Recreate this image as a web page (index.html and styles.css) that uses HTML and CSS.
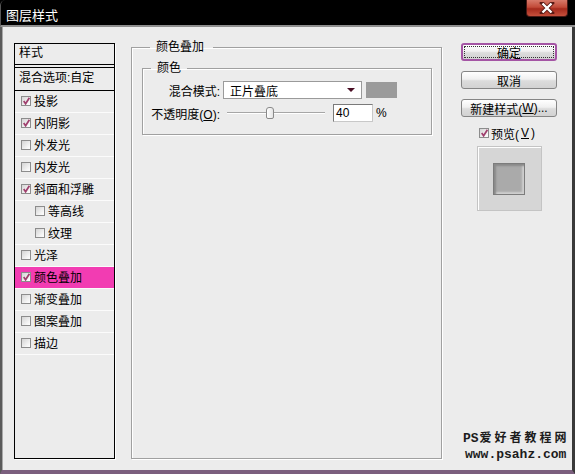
FILE: index.html
```html
<!DOCTYPE html>
<html lang="zh-CN">
<head>
<meta charset="utf-8">
<title>图层样式</title>
<link rel="stylesheet" href="styles.css">
</head>
<body>
<div class="window">
  <div class="titlebar">
    <span class="title">图层样式</span>
    <div class="close">
      <svg width="16" height="12" viewBox="0 0 16 12"><path d="M3 1 L13 11 M13 1 L3 11" stroke="#5a1a14" stroke-width="4" stroke-linecap="square"/><path d="M3.5 1.5 L12.5 10.5 M12.5 1.5 L3.5 10.5" stroke="#ffffff" stroke-width="2.4"/></svg>
    </div>
  </div>
  <div class="content">
    <div class="panel">
      <div class="ph">样式</div>
      <div class="pb">混合选项:自定</div>
      <div class="item"><span class="cb on"></span>投影</div>
      <div class="item"><span class="cb on"></span>内阴影</div>
      <div class="item"><span class="cb"></span>外发光</div>
      <div class="item"><span class="cb"></span>内发光</div>
      <div class="item"><span class="cb on"></span>斜面和浮雕</div>
      <div class="item sub"><span class="cb"></span>等高线</div>
      <div class="item sub"><span class="cb"></span>纹理</div>
      <div class="item"><span class="cb"></span>光泽</div>
      <div class="item sel"><span class="cb on"></span>颜色叠加</div>
      <div class="item"><span class="cb"></span>渐变叠加</div>
      <div class="item"><span class="cb"></span>图案叠加</div>
      <div class="item"><span class="cb"></span>描边</div>
    </div>

    <fieldset class="outer">
      <legend class="lg-outer">颜色叠加</legend>
      <fieldset class="inner">
        <legend class="lg-inner">颜色</legend>
        <div class="form">
          <div class="lbl">混合模式:</div>
          <div class="ctl">
            <div class="select"><span>正片叠底</span><span class="arrow"></span></div>
            <div class="swatch"></div>
          </div>
          <div class="lbl">不透明度(<u>O</u>):</div>
          <div class="ctl">
            <div class="slider"><div class="groove"></div><div class="thumb"></div></div>
            <div class="num">40</div>
            <span class="pct">%</span>
          </div>
        </div>
      </fieldset>
    </fieldset>

    <div class="side">
      <div class="btn default"><span class="focus">确定</span></div>
      <div class="btn">取消</div>
      <div class="btn">新建样式(<u>W</u>)...</div>
      <div class="preview-row"><span class="cb on"></span>预览(<u>V</u>)</div>
      <div class="preview"><div class="square"></div></div>
    </div>

    <div class="watermark">
      <div class="wm1"><span class="ps">PS</span><span class="cn">爱好者教程网</span></div>
      <div class="wm2">www.psahz.com</div>
    </div>
  </div>
</div>
</body>
</html>
```

FILE: styles.css
```css
* { box-sizing: border-box; }
html, body { margin: 0; padding: 0; background: #000; }
body {
  font-family: "Liberation Sans", "Noto Sans CJK SC", sans-serif;
  font-size: 12px;
  color: #000;
}
.window {
  width: 575px;
  height: 474px;
  background: #000;
  display: flex;
  flex-direction: column;
  border-radius: 5px 5px 0 0;
  overflow: hidden;
}
.titlebar {
  height: 27px;
  flex: none;
  display: flex;
  justify-content: space-between;
  align-items: flex-start;
  border-bottom: 2px solid #8e8e8e;
  border-left: 1px solid #555;
  border-radius: 5px 5px 0 0;
}
.title {
  color: #fff;
  font-size: 13px;
  line-height: 16px;
  padding: 7px 0 0 5px;
  font-family: "Noto Sans CJK SC", sans-serif;
}
.close {
  width: 42px;
  height: 17px;
  margin-right: 7px;
  border: 1px solid #4a1a16;
  border-top: none;
  border-radius: 0 0 4px 4px;
  background: linear-gradient(#d77a6a, #c24a38 45%, #a52a1c 55%, #c5503c);
  display: flex;
  align-items: center;
  justify-content: center;
}
.content {
  flex: 1;
  position: relative;
  background: #ececec;
  border-left: 2px solid #5a5a5a;
  border-right: 3px solid #3a3a3a;
  border-bottom: 4px solid #7b5f7e;
  box-shadow: inset 1px 0 0 #a8a8a8;
  display: grid;
  grid-template-columns: 101px 311px 99px;
  column-gap: 16px;
  align-items: start;
  padding: 12px 0 0 12px;
}
.content > .side { margin-left: 3px; }

/* left panel */
.panel {
  margin-top: 4px;
  height: 416px;
  border: 1px solid #000;
  box-shadow: 1px 1px 0 #fff;
}
.ph {
  height: 24px;
  line-height: 19px;
  padding-left: 4px;
  border-bottom: 4px double #000;
}
.pb {
  height: 23px;
  line-height: 20px;
  padding-left: 4px;
  border-bottom: 1px solid #000;
}
.item {
  height: 22px;
  border-bottom: 1px solid #fbfbfb;
  display: flex;
  align-items: center;
  gap: 3px;
  padding-left: 6px;
  padding-bottom: 2px;
}
.item.sub { padding-left: 20px; }
.item.sel { background: #f23cb2; }
.cb {
  width: 10px;
  height: 10px;
  flex: none;
  border: 1px solid #8c8c8c;
  background: linear-gradient(135deg, #d4d4d4, #f4f4f4 70%, #fff);
  position: relative;
}
.cb.on::after {
  content: "";
  position: absolute;
  left: 1px;
  top: 0px;
  width: 7px;
  height: 8px;
  background: no-repeat center/contain url("data:image/svg+xml;utf8,<svg xmlns='http://www.w3.org/2000/svg' viewBox='0 0 7 8'><path d='M0.7 4 L2.6 6.8 L6.4 0.8' fill='none' stroke='%23a0406e' stroke-width='1.7'/></svg>");
}

/* fieldsets */
fieldset {
  margin: 0;
  padding: 0;
  min-width: 0;
  border: 1px solid #a0a0a0;
  box-shadow: 1px 1px 0 #fff, inset 1px 1px 0 #fff;
}
legend {
  line-height: 16px;
  height: 16px;
}
.outer {
  height: 420px;
  padding: 5px 9px 0 10px;
}
.lg-outer {
  margin-left: 8px;
  padding: 0 9px 0 6px;
}
.inner {
  width: 290px;
  padding: 0 0 12px 0;
}
.lg-inner {
  margin-left: 8px;
  padding: 0 6px 0 6px;
}
.form {
  padding-top: 5px;
  display: grid;
  grid-template-columns: 80px 1fr;
  row-gap: 5px;
  align-items: center;
}
.lbl {
  text-align: right;
  padding-right: 3px;
  white-space: nowrap;
}
.ctl {
  display: flex;
  align-items: center;
  height: 18px;
}
.select {
  width: 139px;
  height: 18px;
  border: 1px solid #9a9a9a;
  background: #fff;
  display: flex;
  align-items: center;
  justify-content: space-between;
  padding: 0 6px 0 6px;
}
.arrow {
  width: 0;
  height: 0;
  border-left: 4px solid transparent;
  border-right: 4px solid transparent;
  border-top: 4px solid #4a0e24;
}
.swatch {
  width: 31px;
  height: 16px;
  margin-left: 4px;
  background: #9b9b9b;
}
.slider {
  position: relative;
  width: 98px;
  height: 18px;
  margin-left: 4px;
}
.groove {
  position: absolute;
  left: 0;
  right: 0;
  top: 8px;
  height: 2px;
  border-top: 1px solid #a6a6a6;
  border-bottom: 1px solid #fff;
}
.thumb {
  position: absolute;
  left: 39px;
  top: 3px;
  width: 8px;
  height: 12px;
  border: 1px solid #8a8a8a;
  border-radius: 3px 3px 2px 2px;
  background: linear-gradient(90deg, #fff, #e4e4e4);
}
.num {
  width: 40px;
  height: 18px;
  margin-left: 8px;
  background: #fff;
  border: 1px solid #7a7a7a;
  border-right-color: #c8c8c8;
  border-bottom-color: #c8c8c8;
  line-height: 16px;
  padding-left: 2px;
}
.pct { margin-left: 3px; }

/* right side */
.side {
  margin-top: 4px;
  display: flex;
  flex-direction: column;
  align-items: stretch;
}
.btn {
  height: 18px;
  border: 1px solid #858585;
  border-radius: 3px;
  background: linear-gradient(#ffffff, #f0f0f0 45%, #dcdcdc 55%, #d2d2d2);
  display: flex;
  align-items: center;
  justify-content: center;
  margin-bottom: 10px;
  white-space: nowrap;
}
.btn.default {
  border: 2px solid #a455a4;
  padding: 1px;
}
.focus {
  flex: 1;
  align-self: stretch;
  border: 1px dotted #333;
  display: flex;
  align-items: center;
  justify-content: center;
}
.preview-row {
  display: flex;
  align-items: center;
  justify-content: center;
  gap: 2px;
  height: 16px;
  margin-top: -2px;
  padding-right: 4px;
}
.preview {
  align-self: center;
  margin-top: 5px;
  width: 65px;
  height: 65px;
  background: #d6d6d6;
  border: 1px solid #c4c4c4;
  box-shadow: inset 1px 1px 0 #fff;
  display: flex;
  align-items: center;
  justify-content: center;
}
.square {
  width: 32px;
  height: 32px;
  background: #aaaaaa;
  border: 1px solid #7c7c7c;
  box-shadow: inset 2px 2px 2px #8a8a8a, inset -2px -2px 2px #cfcfcf;
}

.watermark {
  position: absolute;
  left: 461px;
  bottom: 8px;
  font-weight: bold;
  color: #1c1c1c;
  white-space: nowrap;
}
.wm1 {
  line-height: 17px;
  font-size: 12px;
}
.wm1 .ps {
  font-family: "Liberation Mono", monospace;
  font-size: 13px;
}
.wm1 .cn {
  font-family: "Noto Sans CJK SC", sans-serif;
  letter-spacing: 3px;
  margin-left: 1px;
}
.wm2 {
  font-family: "Liberation Mono", monospace;
  font-size: 13px;
  line-height: 15px;
  padding-left: 2px;
}
```
